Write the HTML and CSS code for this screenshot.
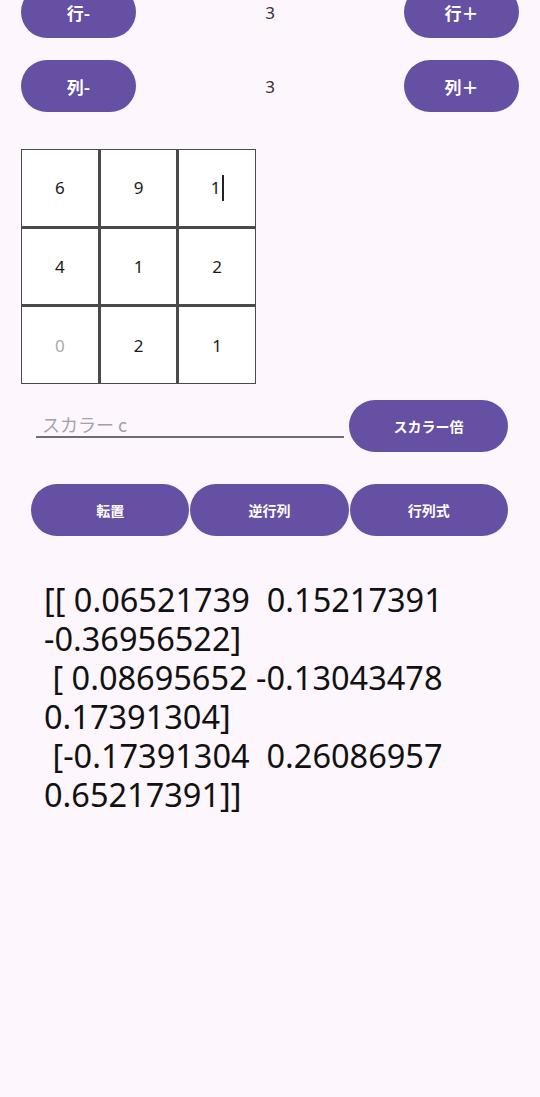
FILE: index.html
```html
<!DOCTYPE html>
<html lang="ja">
<head>
<meta charset="utf-8">
<link rel="stylesheet" href="styles.css">
</head>
<body>
<div class="page">
  <div class="stepper first">
    <button class="pill big">行-</button>
    <span class="count">3</span>
    <button class="pill big">行＋</button>
  </div>
  <div class="stepper">
    <button class="pill big">列-</button>
    <span class="count">3</span>
    <button class="pill big">列＋</button>
  </div>
  <div class="grid">
    <div class="cell">6</div>
    <div class="cell">9</div>
    <div class="cell">1<span class="caret"></span></div>
    <div class="cell">4</div>
    <div class="cell">1</div>
    <div class="cell">2</div>
    <div class="cell hint">0</div>
    <div class="cell">2</div>
    <div class="cell">1</div>
  </div>
  <div class="scalar-row">
    <div class="field"><span class="placeholder">スカラー c</span></div>
    <button class="pill small wide">スカラー倍</button>
  </div>
  <div class="ops">
    <button class="pill small">転置</button>
    <button class="pill small">逆行列</button>
    <button class="pill small">行列式</button>
  </div>
  <div class="result">
    <div class="line">[[ 0.06521739  0.15217391</div>
    <div class="line">-0.36956522]</div>
    <div class="line"> [ 0.08695652 -0.13043478</div>
    <div class="line">0.17391304]</div>
    <div class="line"> [-0.17391304  0.26086957</div>
    <div class="line">0.65217391]]</div>
  </div>
</div>
</body>
</html>
```
FILE: styles.css
```css
html, body {
  margin: 0;
  padding: 0;
  background: #fdf7fd;
}
body {
  font-family: "Noto Sans", "Noto Sans CJK JP", sans-serif;
  color: #1c1b1f;
  width: 540px;
  height: 1097px;
  overflow: hidden;
}
.page {
  display: flex;
  flex-direction: column;
}
.pill {
  border: none;
  background: #6550a3;
  color: #ffffff;
  border-radius: 26px;
  height: 52px;
  font-family: "Noto Sans CJK JP", sans-serif;
  font-weight: 700;
  padding: 0;
  margin: 0;
}
.big {
  width: 115px;
  font-size: 17px;
}
.small {
  font-size: 14px;
}
.stepper {
  display: flex;
  align-items: center;
  justify-content: space-between;
  padding: 0 21px;
  margin-top: 22px;
}
.stepper.first {
  margin-top: -14px;
}
.count {
  font-size: 17px;
  color: #333;
  font-family: "Noto Sans", sans-serif;
}
.grid {
  margin: 37px 0 0 21px;
  display: grid;
  grid-template-columns: repeat(3, 1fr);
  grid-template-rows: repeat(3, 1fr);
  gap: 3px;
  padding: 1px;
  width: 235px;
  height: 235px;
  box-sizing: border-box;
  background: #4a4a4a;
}
.cell {
  background: #ffffff;
  display: flex;
  align-items: center;
  justify-content: center;
  font-size: 17px;
  color: #1a1a1a;
}
.cell.hint {
  color: #aaa;
}
.caret {
  display: inline-block;
  width: 2px;
  height: 26px;
  background: #222;
  margin-left: 1px;
}
.scalar-row {
  display: flex;
  align-items: flex-start;
  margin-top: 16px;
  padding: 0 32px 0 36px;
  gap: 5px;
}
.field {
  flex: 1;
  height: 38px;
  box-sizing: border-box;
  border-bottom: 2px solid #6f6b73;
  display: flex;
  align-items: flex-end;
  padding: 0 0 0 6px;
}
.placeholder {
  font-family: "Noto Sans CJK JP", sans-serif;
  font-size: 18px;
  color: #a3a1a6;
  line-height: 22px;
  padding-bottom: 1px;
}
.wide {
  width: 159px;
}
.ops {
  display: grid;
  grid-template-columns: repeat(3, 1fr);
  gap: 1px;
  padding: 0 32px 0 31px;
  margin-top: 32px;
}
.result {
  margin-top: 44px;
  padding-left: 44px;
  font-family: "Noto Sans", sans-serif;
  font-size: 32.5px;
  line-height: 39.1px;
  color: #111;
}
.line {
  white-space: pre;
}
```
